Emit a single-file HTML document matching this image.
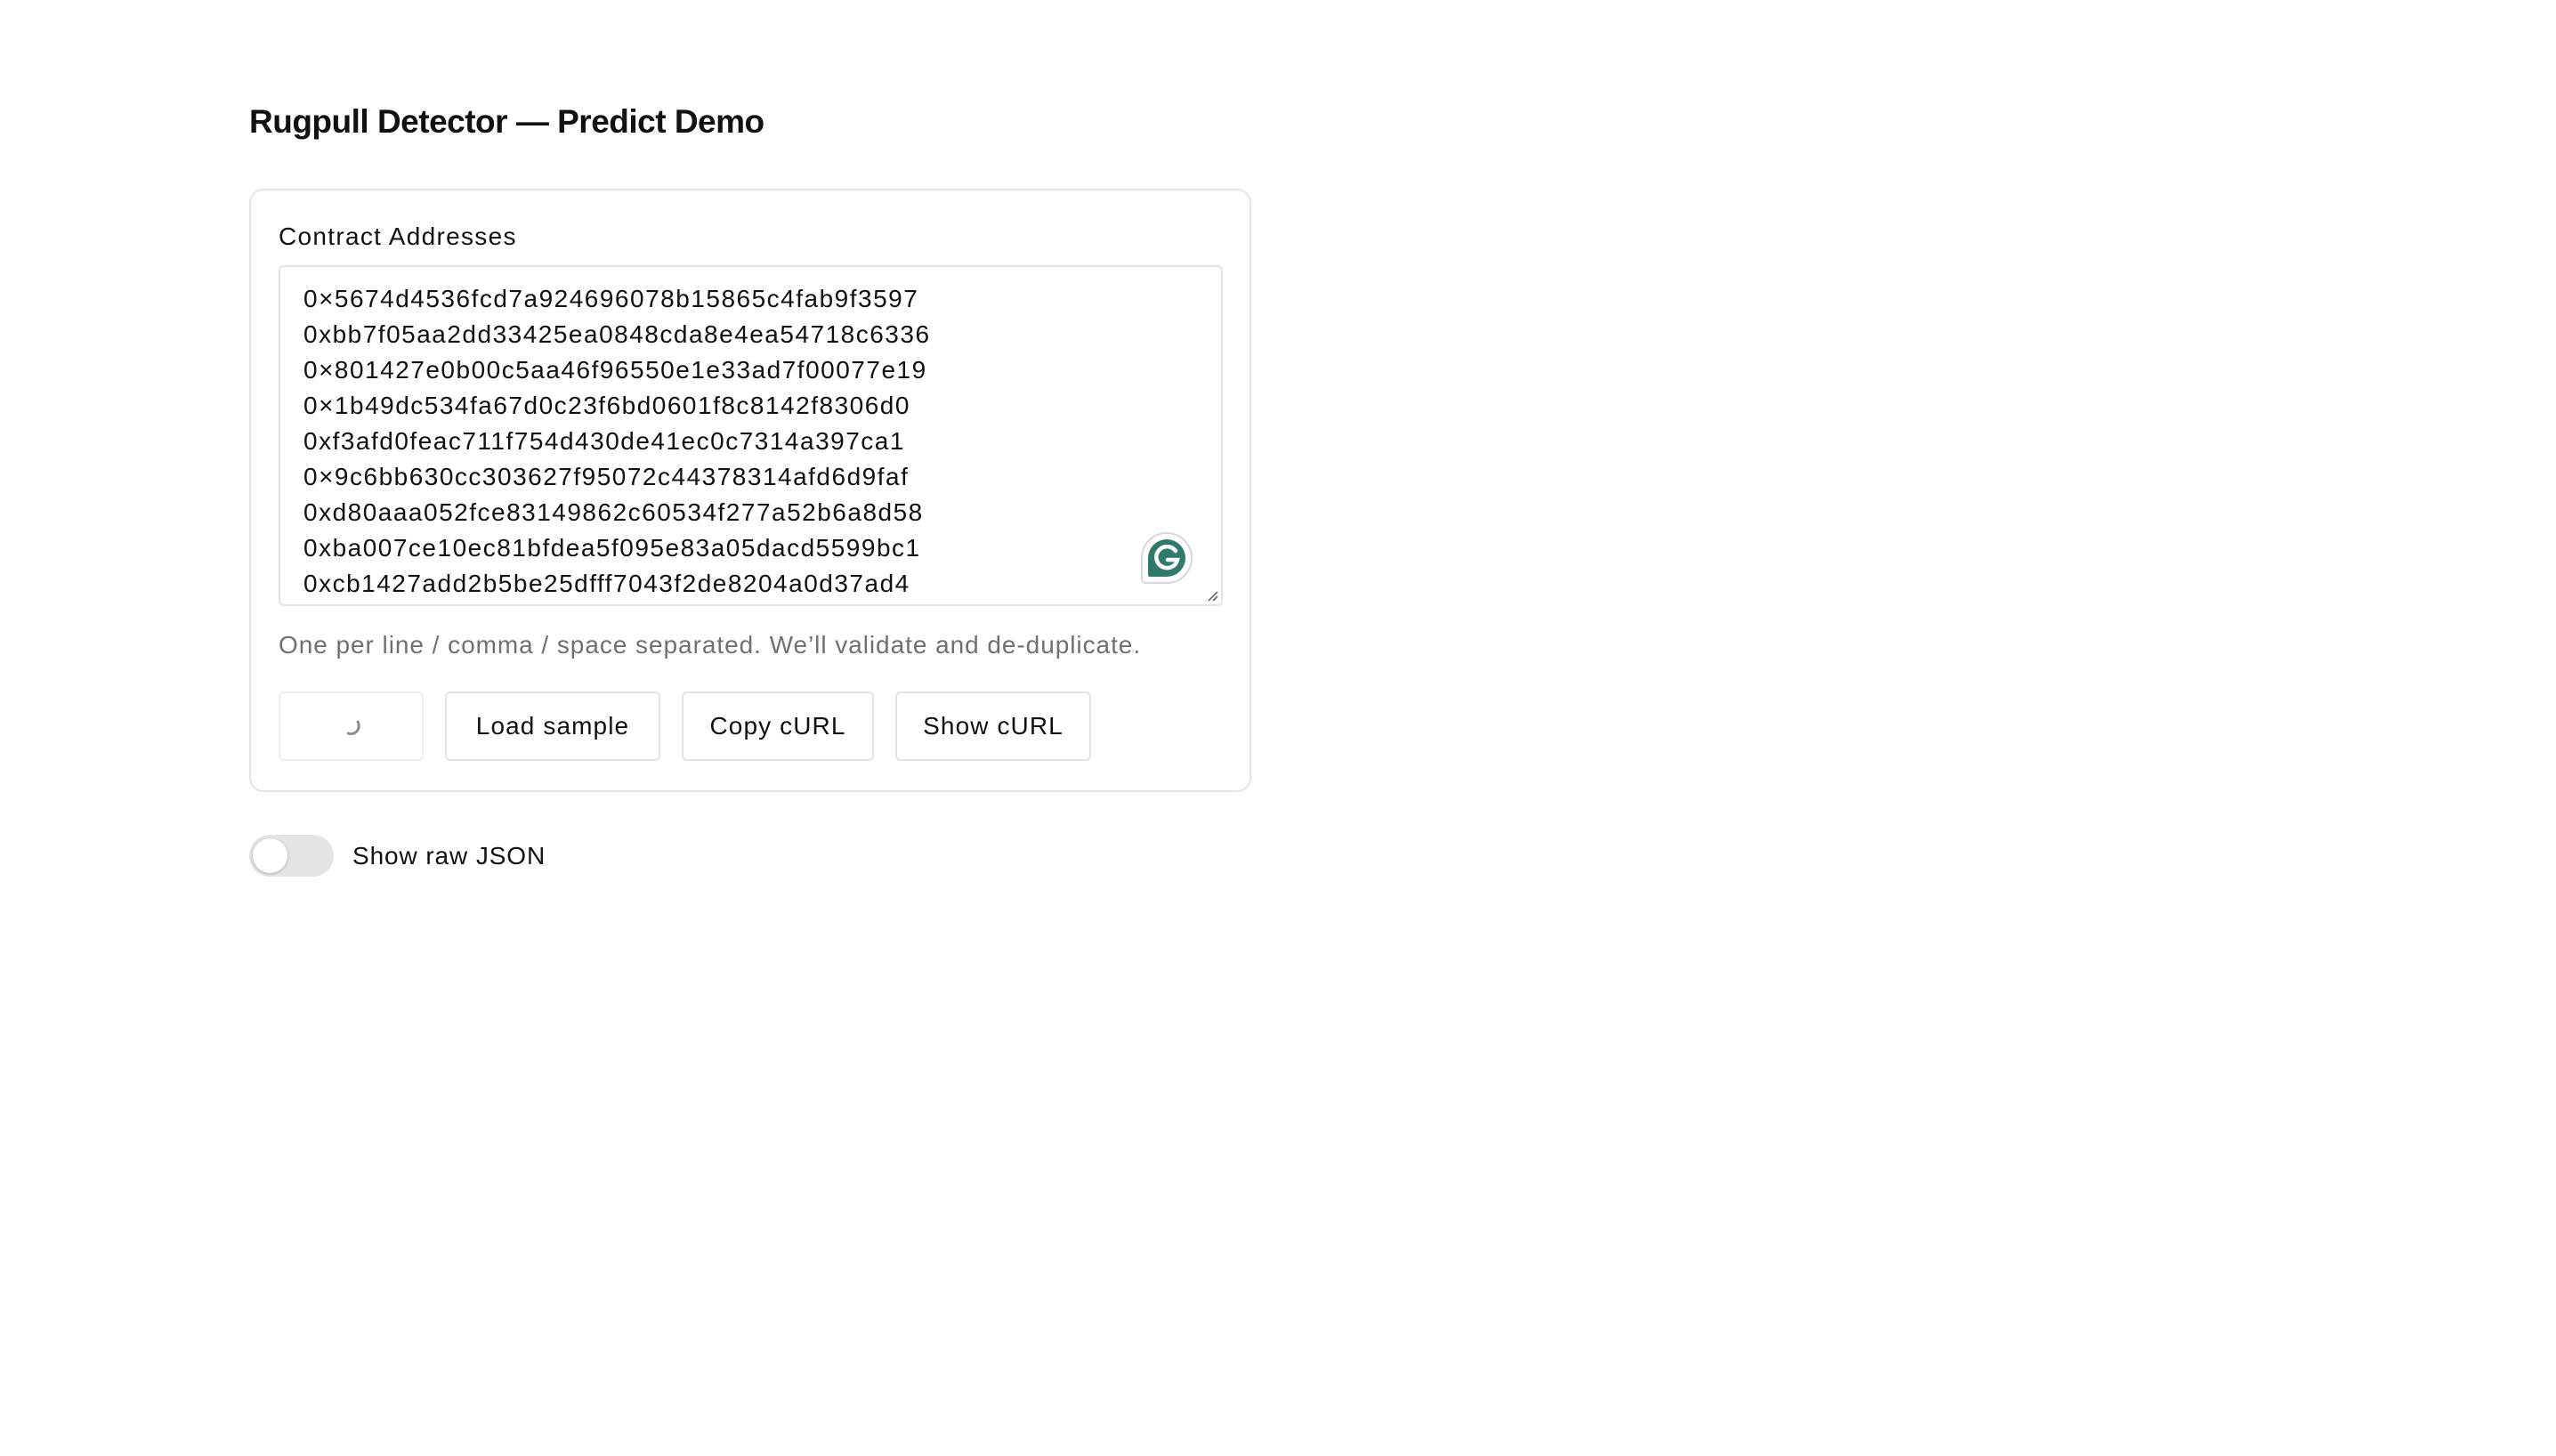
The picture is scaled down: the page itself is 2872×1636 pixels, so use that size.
<!DOCTYPE html>
<html><head><meta charset="utf-8"><style>
html,body{margin:0;padding:0;background:#fff;width:2872px;height:1636px;overflow:hidden;font-family:"Liberation Sans",sans-serif;color:#111;}
.title{position:absolute;left:280px;top:116px;font-size:37px;font-weight:bold;letter-spacing:-0.5px;}
.card{position:absolute;left:280px;top:212px;width:1126px;height:678px;border:2px solid #e5e5e7;border-radius:16px;box-sizing:border-box;}
.label{position:absolute;left:313px;top:250px;font-size:28px;letter-spacing:1.3px;}
.ta{position:absolute;left:313px;top:298px;width:1061px;height:383px;border:2px solid #e3e3e6;border-radius:6px;box-sizing:border-box;overflow:hidden;}
.lines{position:absolute;left:26px;top:16px;font-size:28px;line-height:40px;letter-spacing:1.5px;color:#111;}
.help{position:absolute;left:313px;top:709px;font-size:28px;color:#6f6f76;letter-spacing:0.95px;}
.btn{position:absolute;top:777px;height:78px;border:2px solid #e3e3e6;border-radius:6px;box-sizing:border-box;font-size:28px;display:flex;align-items:center;justify-content:center;color:#111;letter-spacing:1.1px;}
.tog{position:absolute;left:280px;top:938px;width:95px;height:47px;background:#e4e4e7;border-radius:24px;}
.knob{position:absolute;left:4px;top:4px;width:39px;height:39px;background:#fff;border-radius:50%;box-shadow:0 1px 3px rgba(0,0,0,.25);}
.tl{position:absolute;left:396px;top:946px;font-size:28px;letter-spacing:0.9px;}
</style></head><body>
<div class="title">Rugpull Detector — Predict Demo</div>
<div class="card"></div>
<div class="label">Contract Addresses</div>
<div class="ta"><div class="lines">
0×5674d4536fcd7a924696078b15865c4fab9f3597<br>
0xbb7f05aa2dd33425ea0848cda8e4ea54718c6336<br>
0×801427e0b00c5aa46f96550e1e33ad7f00077e19<br>
0×1b49dc534fa67d0c23f6bd0601f8c8142f8306d0<br>
0xf3afd0feac711f754d430de41ec0c7314a397ca1<br>
0×9c6bb630cc303627f95072c44378314afd6d9faf<br>
0xd80aaa052fce83149862c60534f277a52b6a8d58<br>
0xba007ce10ec81bfdea5f095e83a05dacd5599bc1<br>
0xcb1427add2b5be25dfff7043f2de8204a0d37ad4
</div>
<svg style="position:absolute;left:966px;top:297px" width="60" height="60" viewBox="0 0 60 60">
<path d="M30 2a28 28 0 1 1 0 56H6a4 4 0 0 1-4-4V30A28 28 0 0 1 30 2z" fill="#fff" stroke="#d6d6e0" stroke-width="2"/>
<path d="M30 9a21 21 0 1 1 0 42H11a2 2 0 0 1-2-2V30A21 21 0 0 1 30 9z" fill="#2f7a6a"/>
<path d="M40 22a12 12 0 1 0 2 10h-11" fill="none" stroke="#fff" stroke-width="4.5" stroke-linecap="round"/>
</svg>
<svg style="position:absolute;right:2px;bottom:2px" width="16" height="16"><path d="M14 4L4 14M14 9L9 14" stroke="#666" stroke-width="1.6"/></svg>
</div>
<div class="help">One per line / comma / space separated. We’ll validate and de-duplicate.</div>
<div class="btn" style="left:313px;width:163px;border-color:#efeff1"><svg width="36" height="36" viewBox="0 0 36 36"><path d="M25 13a9 9 0 0 1-11 13" fill="none" stroke="#888" stroke-width="2.8" stroke-linecap="round"/></svg></div>
<div class="btn" style="left:500px;width:242px">Load sample</div>
<div class="btn" style="left:766px;width:216px">Copy cURL</div>
<div class="btn" style="left:1006px;width:220px">Show cURL</div>
<div class="tog"><div class="knob"></div></div>
<div class="tl">Show raw JSON</div>
</body></html>
